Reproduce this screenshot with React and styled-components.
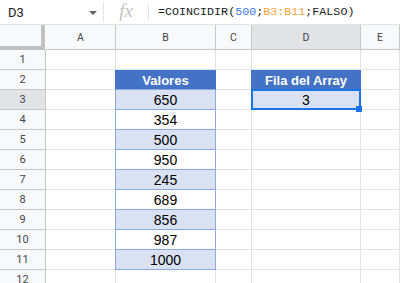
import styled, { createGlobalStyle } from "styled-components";

const GlobalStyle = createGlobalStyle`
  body {
    margin: 0;
    background: #ffffff;
    font-family: Roboto, "Liberation Sans", sans-serif;
  }
`

const colors = {
  grid: "#e2e3e3",
  headerLine: "#c7c7c7",
  headerBg: "#f8f9fa",
  headerActive: "#e1e3e6",
  tableHead: "#4472c4",
  tableLine: "#8ea9db",
  band: "#d9e1f2",
  select: "#1a73e8",
}

const Page = styled.div`
  width: 400px;
  height: 283px;
  overflow: hidden;
  background: #ffffff;
`

const FormulaBar = styled.div`
  display: flex;
  align-items: center;
  height: 24px;
  border-bottom: 1px solid ${colors.grid};
`

const NameBox = styled.div`
  width: 103px;
  box-sizing: border-box;
  padding: 0 6px 0 8px;
  display: flex;
  align-items: center;
  justify-content: space-between;
  font-size: 13px;
  color: #202124;
`

const Caret = styled.span`
  width: 0;
  height: 0;
  border-left: 4px solid transparent;
  border-right: 4px solid transparent;
  border-top: 4px solid #5f6368;
  margin-top: 1px;
`

const Divider = styled.div`
  width: 1px;
  height: ${(props) => props.size || "20px"};
  background: ${colors.grid};
`

const FxBox = styled.div`
  width: 44px;
  display: flex;
  justify-content: center;
  font-family: "Liberation Serif", serif;
  font-style: italic;
  font-size: 19px;
  color: #c4c4c4;
  margin-top: -2px;
`

const Formula = styled.div`
  padding-left: 9px;
  font-family: "Liberation Mono", monospace;
  font-size: 11.7px;
  color: #202124;
  white-space: pre;
`

const Token = styled.span`
  color: ${(props) => props.color};
`

const Sheet = styled.div`
  display: grid;
  grid-template-columns: 46px 70px 100px 36px 109px 1fr;
  grid-template-rows: 25px repeat(12, 20px);
`

const Corner = styled.div`
  box-sizing: border-box;
  background: ${colors.headerBg};
  border-right: 4px solid #c0c0c0;
  border-bottom: 4px solid #c0c0c0;
  margin-right: 1px;
`

const ColHead = styled.div`
  box-sizing: border-box;
  display: flex;
  align-items: center;
  justify-content: center;
  background: ${(props) => (props.active ? colors.headerActive : colors.headerBg)};
  border-right: 1px solid ${colors.headerLine};
  border-bottom: 1px solid ${colors.headerLine};
  font-size: 10.5px;
  color: #444746;
  padding-top: 1px;
`

const RowHead = styled.div`
  box-sizing: border-box;
  display: flex;
  align-items: center;
  justify-content: center;
  background: ${(props) => (props.active ? colors.headerActive : colors.headerBg)};
  border-right: 1px solid ${colors.headerLine};
  border-bottom: 1px solid ${colors.headerLine};
  font-size: 11px;
  color: #444746;
`

const Cell = styled.div`
  box-sizing: border-box;
  border-right: 1px solid ${colors.grid};
  border-bottom: 1px solid ${colors.grid};
`

const TableCell = styled.div`
  position: relative;
  box-sizing: border-box;
  display: flex;
  align-items: center;
  justify-content: center;
  background: ${(props) =>
    props.head ? colors.tableHead : props.band ? colors.band : "#ffffff"};
  border-right: 1px solid ${(props) => (props.head ? colors.tableHead : colors.tableLine)};
  border-bottom: 1px solid ${colors.tableLine};
  box-shadow: -1px 0 0 ${(props) => (props.head ? colors.tableHead : colors.tableLine)};
  font-family: "Liberation Sans", Arial, sans-serif;
  font-size: ${(props) => (props.head ? "13px" : "14px")};
  font-weight: ${(props) => (props.head ? 700 : 400)};
  color: ${(props) => (props.head ? "#ffffff" : "#000000")};
  padding-top: 1px;
`

const Selection = styled.div`
  position: absolute;
  top: -1px;
  left: -1px;
  right: -1px;
  bottom: -1px;
  border: 2px solid ${colors.select};
  pointer-events: none;
`

const FillHandle = styled.div`
  position: absolute;
  right: -2px;
  bottom: -3px;
  width: 6px;
  height: 6px;
  background: ${colors.select};
`

const columns = ["A", "B", "C", "D", "E"]
const values = [650, 354, 500, 950, 245, 689, 856, 987, 1000]

function Row({ index }) {
  // row 2 holds the headers, rows 3..11 the values
  const valueIdx = index - 3
  let bCell = <Cell />
  if (index === 2) bCell = <TableCell head>Valores</TableCell>
  else if (valueIdx >= 0 && valueIdx < values.length)
    bCell = <TableCell band={valueIdx % 2 === 0}>{values[valueIdx]}</TableCell>

  let dCell = <Cell />
  if (index === 2) dCell = <TableCell head>Fila del Array</TableCell>
  if (index === 3)
    dCell = (
      <TableCell band>
        3
        <Selection />
        <FillHandle />
      </TableCell>
    )

  return (
    <>
      <RowHead active={index === 3}>{index}</RowHead>
      <Cell />
      {bCell}
      <Cell />
      {dCell}
      <Cell />
    </>
  )
}

export default function App() {
  return (
    <Page>
      <GlobalStyle />
      <FormulaBar>
        <NameBox>
          <span>D3</span>
          <Caret />
        </NameBox>
        <Divider />
        <FxBox>fx</FxBox>
        <Divider size="15px" />
        <Formula>
          =COINCIDIR(<Token color="#3b78e7">500</Token>;
          <Token color="#f6a33a">B3:B11</Token>;FALSO)
        </Formula>
      </FormulaBar>
      <Sheet>
        <Corner />
        {columns.map((c) => (
          <ColHead key={c} active={c === "D"}>
            {c}
          </ColHead>
        ))}
        {Array.from({ length: 12 }, (_, i) => (
          <Row key={i} index={i + 1} />
        ))}
      </Sheet>
    </Page>
  )
}
